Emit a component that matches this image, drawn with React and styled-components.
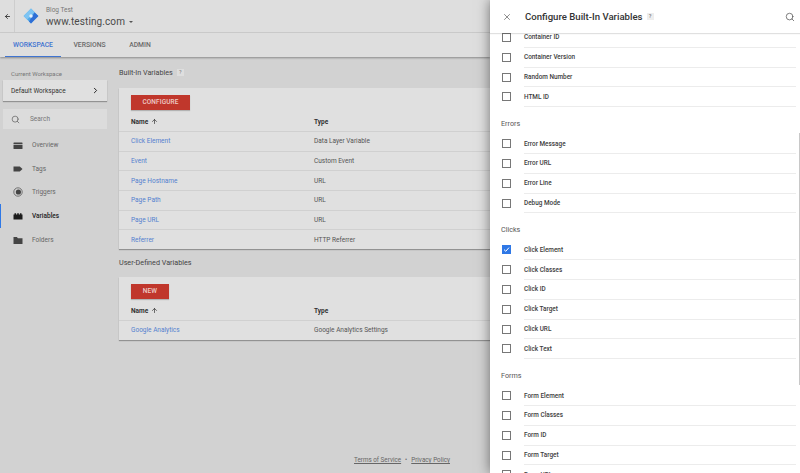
import React from "react";
import styled, { createGlobalStyle } from "styled-components";
import { ArrowLeft, ArrowUp, ChevronRight, Search, X } from "lucide-react";

const GlobalStyle = createGlobalStyle`
  html, body { margin: 0; padding: 0; background: #d2d2d2; }
  body { font-family: Roboto, "Liberation Sans", sans-serif; }
  * { box-sizing: border-box; }
`;

const Page = styled.div`
  display: flex;
  width: 800px;
  height: 473px;
  overflow: hidden;
`;
const Main = styled.div`
  display: flex;
  flex-direction: column;
  flex: 0 0 490px;
  width: 490px;
  height: 473px;
  overflow: hidden;
  background: #d2d2d2;
`;
const TopBar = styled.header`
  display: flex;
  align-items: center;
  flex: 0 0 33px;
  background: #dedede;
  border-bottom: 1px solid #cecece;
`;
const BackBox = styled.div`
  display: flex;
  align-items: center;
  justify-content: center;
  width: 15px;
  height: 32px;
  border-right: 1px solid #cdcdcd;
  color: #333;
`;
const Logo = styled.svg`
  width: 16px;
  height: 16px;
  margin: 0 7px 0 8px;
  flex: none;
`;
const Crumbs = styled.div`
  display: flex;
  flex-direction: column;
  padding-top: 2px;
`;
const AccountName = styled.span`
  font-size: 6.5px;
  line-height: 9px;
  color: #777;
`;
const ContainerName = styled.span`
  display: flex;
  align-items: center;
  gap: 4px;
  font-size: 10px;
  line-height: 13px;
  color: #4a4a4a;
  letter-spacing: 0.1px;
`;
const Caret = styled.i`
  width: 0;
  height: 0;
  border-left: 2.5px solid transparent;
  border-right: 2.5px solid transparent;
  border-top: 2.5px solid #555;
`;
const Tabs = styled.nav`
  display: flex;
  flex: 0 0 24px;
  padding-left: 5px;
  background: #dedede;
  box-shadow: 0 1px 2px rgba(0, 0, 0, 0.35);
  position: relative;
`;
const Tab = styled.div`
  display: flex;
  align-items: center;
  justify-content: center;
  width: ${(p) => p.$w}px;
  margin-right: ${(p) => p.$gap}px;
  font-size: 6.8px;
  font-weight: 500;
  color: ${(p) => (p.$active ? "#3f74d1" : "#6a6a6a")};
  border-bottom: 1px solid ${(p) => (p.$active ? "#3f74d1" : "transparent")};
`;
const Body = styled.div`
  display: flex;
  flex: 1;
  min-height: 0;
`;
const Sidebar = styled.aside`
  display: flex;
  flex-direction: column;
  flex: 0 0 119px;
  padding-top: 13px;
`;
const WorkspaceLabel = styled.div`
  font-size: 6px;
  line-height: 8px;
  color: #777;
  padding-left: 11px;
  margin-bottom: 2px;
`;
const WorkspaceBox = styled.div`
  display: flex;
  align-items: center;
  justify-content: space-between;
  width: 104px;
  height: 21px;
  margin-left: 3px;
  padding: 0 7px 0 8px;
  font-size: 6.5px;
  color: #333;
  background: #e0e0e0;
  box-shadow: 0 1px 1px rgba(0, 0, 0, 0.3);
`;
const SearchBox = styled.div`
  display: flex;
  align-items: center;
  gap: 10px;
  width: 104px;
  height: 20px;
  margin: 8px 0 4px 3px;
  padding-left: 8px;
  font-size: 6.5px;
  color: #777;
  background: #dcdcdc;
`;
const NavItem = styled.div`
  display: flex;
  align-items: center;
  gap: 9px;
  height: 23.7px;
  padding-left: 13px;
  font-size: 6.5px;
  font-weight: ${(p) => (p.$active ? 500 : 400)};
  color: ${(p) => (p.$active ? "#222" : "#666")};
  border-left: 1px solid ${(p) => (p.$active ? "#2f78e6" : "transparent")};
`;
const NavIcon = styled.svg`
  width: 10px;
  height: 10px;
  flex: none;
  margin-left: -1px;
`;
const Content = styled.main`
  display: flex;
  flex-direction: column;
  flex: 1;
  min-width: 0;
`;
const SectionHead = styled.h2`
  display: flex;
  align-items: center;
  gap: 4px;
  height: ${(p) => p.$h}px;
  margin: 0;
  padding-bottom: ${(p) => p.$pb || 0}px;
  font-size: 7.2px;
  font-weight: 400;
  color: #444;
`;
const HelpMark = styled.span`
  display: inline-flex;
  align-items: center;
  justify-content: center;
  width: 7px;
  height: 7px;
  font-size: 5.5px;
  line-height: 7px;
  color: #777;
  background: ${(p) => (p.$light ? "#eee" : "#dedede")};
`;
const Card = styled.section`
  width: 400px;
  background: #e0e0e0;
  box-shadow: 0 1px 1px rgba(0, 0, 0, 0.3);
`;
const CardTop = styled.div`
  padding: 7px 12px 0;
  height: ${(p) => p.$h}px;
`;
const RedButton = styled.div`
  display: flex;
  align-items: center;
  justify-content: center;
  width: ${(p) => p.$w}px;
  height: 14.5px;
  font-size: 6.5px;
  font-weight: 500;
  letter-spacing: 0.1px;
  color: #eecdc9;
  background: #c0372c;
  box-shadow: 0 1px 1px rgba(0, 0, 0, 0.2);
`;
const Row = styled.div`
  display: grid;
  grid-template-columns: 183px 1fr;
  align-items: center;
  height: 19.7px;
  padding-left: 12px;
  font-size: 6.5px;
  color: #555;
  border-top: 1px solid #d0d0d0;
`;
const HeadRow = styled.div`
  display: grid;
  grid-template-columns: 183px 1fr;
  align-items: center;
  height: 19px;
  padding: 0 0 0 12px;
  font-size: 6.5px;
  font-weight: 700;
  color: #333;
`;
const NameCell = styled.span`
  display: flex;
  align-items: center;
  gap: 3px;
`;
const RowLink = styled.a`
  color: #5480cf;
`;
const Footer = styled.footer`
  display: flex;
  gap: 4px;
  justify-content: flex-end;
  margin-top: auto;
  padding: 0 40px 9px 0;
  font-size: 6.3px;
  line-height: 8px;
  color: #666;
`;
const FootLink = styled.a`
  text-decoration: underline;
`;
const Drawer = styled.div`
  display: flex;
  flex-direction: column;
  flex: 0 0 310px;
  height: 473px;
  background: #fff;
  box-shadow: 0 0 12px rgba(0, 0, 0, 0.5);
  position: relative;
  z-index: 2;
`;
const DrawerHead = styled.div`
  display: flex;
  align-items: center;
  flex: 0 0 33px;
  padding: 0 5px 0 12px;
  background: #fff;
  box-shadow: 0 1px 1px rgba(0, 0, 0, 0.12);
  position: relative;
  z-index: 1;
  color: #555;
`;
const DrawerTitle = styled.h1`
  flex: 1;
  display: flex;
  align-items: center;
  gap: 4px;
  margin: 0 0 0 13px;
  font-size: 9.6px;
  font-weight: 500;
  color: #333;
`;
const DrawerScroll = styled.div`
  flex: 1;
  min-height: 0;
  overflow: hidden;
  padding-left: 11px;
`;
const DrawerList = styled.div`
  margin-top: -5px;
`;
const GroupTitle = styled.div`
  display: flex;
  align-items: center;
  height: 27px;
  padding-top: 6px;
  font-size: 7.2px;
  color: #555;
`;
const CheckRow = styled.div`
  display: flex;
  height: 19.8px;
`;
const Check = styled.span`
  display: flex;
  align-items: center;
  justify-content: center;
  flex: none;
  width: 9px;
  height: 9px;
  margin: 5px 13px 0 1px;
  border: 1px solid ${(p) => (p.$on ? "#2f78e6" : "#777")};
  background: ${(p) => (p.$on ? "#2f78e6" : "#fff")};
  color: #fff;
`;
const CheckLabel = styled.div`
  flex: 1;
  margin-right: 4px;
  display: flex;
  align-items: center;
  font-size: 6.4px;
  font-weight: 500;
  color: #3c3c3c;
  border-bottom: 1px solid #ececec;
`;
const ScrollThumb = styled.div`
  position: absolute;
  right: 0;
  top: 133px;
  width: 1px;
  height: 252px;
  background: #c8c8c8;
`;

const builtIn = [
  ["Click Element", "Data Layer Variable"],
  ["Event", "Custom Event"],
  ["Page Hostname", "URL"],
  ["Page Path", "URL"],
  ["Page URL", "URL"],
  ["Referrer", "HTTP Referrer"],
];

const groups = [
  { items: ["Container ID", "Container Version", "Random Number", "HTML ID"] },
  { title: "Errors", items: ["Error Message", "Error URL", "Error Line", "Debug Mode"] },
  { title: "Clicks", items: ["Click Element", "Click Classes", "Click ID", "Click Target", "Click URL", "Click Text"] },
  { title: "Forms", items: ["Form Element", "Form Classes", "Form ID", "Form Target", "Form URL"] },
];

const navIcons = {
  Overview: (
    <>
      <path d="M1 2.5h8a.5.5 0 0 1 .5.5v1H.5V3a.5.5 0 0 1 .5-.5z" fill="#444" />
      <path d="M.5 4.8h9v3.7a.5.5 0 0 1-.5.5H1a.5.5 0 0 1-.5-.5z" fill="#444" />
    </>
  ),
  Tags: <path d="M.5 2.5h6.3L9.5 5 6.8 7.5H.5z" fill="#444" />,
  Triggers: (
    <>
      <circle cx="5" cy="5" r="4.2" fill="none" stroke="#666" strokeWidth="0.9" />
      <circle cx="5.4" cy="5" r="2.6" fill="#444" />
    </>
  ),
  Variables: <path d="M.5 8.5V3.5h1V2.3h1.6v1.2h1.1V2.3h1.6v1.2h1.1V2.3h1.6v1.2h1v5z" fill="#1c1c1c" />,
  Folders: <path d="M.5 2h3.4l1 1.2h4.6v5.8H.5z" fill="#444" />,
};

function Sort() {
  return <ArrowUp size={7} strokeWidth={2.4} />;
}

export default function App() {
  return (
    <Page>
      <GlobalStyle />
      <Main>
        <TopBar>
          <BackBox>
            <ArrowLeft size={7} strokeWidth={3} />
          </BackBox>
          <Logo viewBox="0 0 16 16">
            <path d="M8 .6 15.4 8 8 15.4.6 8z" fill="#4fa8e8" />
            <path d="M8 .6 11.6 4.2 4.2 11.6.6 8z" fill="#7ec4f2" />
            <path d="M11.6 4.4 15.4 8 8 15.4 6 13.4z" fill="#2f6fd6" />
            <circle cx="8" cy="8" r="1.7" fill="#e8f2fb" />
          </Logo>
          <Crumbs>
            <AccountName>Blog Test</AccountName>
            <ContainerName>
              www.testing.com <Caret />
            </ContainerName>
          </Crumbs>
        </TopBar>
        <Tabs>
          <Tab $active $w={56} $gap={7}>WORKSPACE</Tab>
          <Tab $w={43} $gap={18}>VERSIONS</Tab>
          <Tab $w={22} $gap={0}>ADMIN</Tab>
        </Tabs>
        <Body>
          <Sidebar>
            <WorkspaceLabel>Current Workspace</WorkspaceLabel>
            <WorkspaceBox>
              Default Workspace
              <ChevronRight size={9} strokeWidth={2.6} color="#222" />
            </WorkspaceBox>
            <SearchBox>
              <Search size={9} color="#666" />
              Search
            </SearchBox>
            {Object.keys(navIcons).map((name) => (
              <NavItem key={name} $active={name === "Variables"}>
                <NavIcon viewBox="0 0 10 10">{navIcons[name]}</NavIcon>
                {name}
              </NavItem>
            ))}
          </Sidebar>
          <Content>
            <SectionHead $h={31}>
              Built-In Variables <HelpMark>?</HelpMark>
            </SectionHead>
            <Card>
              <CardTop $h={24}>
                <RedButton $w={59}>CONFIGURE</RedButton>
              </CardTop>
              <HeadRow>
                <NameCell>Name <Sort /></NameCell>
                <span>Type</span>
              </HeadRow>
              {builtIn.map(([name, type]) => (
                <Row key={name}>
                  <RowLink>{name}</RowLink>
                  <span>{type}</span>
                </Row>
              ))}
            </Card>
            <SectionHead $h={28} $pb={2}>User-Defined Variables</SectionHead>
            <Card>
              <CardTop $h={24}>
                <RedButton $w={38}>NEW</RedButton>
              </CardTop>
              <HeadRow>
                <NameCell>Name <Sort /></NameCell>
                <span>Type</span>
              </HeadRow>
              <Row>
                <RowLink>Google Analytics</RowLink>
                <span>Google Analytics Settings</span>
              </Row>
            </Card>
            <Footer>
              <FootLink>Terms of Service</FootLink>
              <span>•</span>
              <FootLink>Privacy Policy</FootLink>
            </Footer>
          </Content>
        </Body>
      </Main>
      <Drawer>
        <DrawerHead>
          <X size={10} strokeWidth={1.6} />
          <DrawerTitle>
            Configure Built-In Variables <HelpMark $light>?</HelpMark>
          </DrawerTitle>
          <Search size={10} strokeWidth={1.8} />
        </DrawerHead>
        <DrawerScroll>
          <DrawerList>
            {groups.map((g) => (
              <div key={g.items[0]}>
                {g.title && <GroupTitle>{g.title}</GroupTitle>}
                {g.items.map((item) => {
                  const on = g.title === "Clicks" && item === "Click Element";
                  return (
                    <CheckRow key={item}>
                      <Check $on={on}>
                        {on && (
                          <svg width="7" height="7" viewBox="0 0 7 7">
                            <path d="M1 3.6 2.8 5.3 6 1.6" fill="none" stroke="#fff" strokeWidth="1" />
                          </svg>
                        )}
                      </Check>
                      <CheckLabel>{item}</CheckLabel>
                    </CheckRow>
                  );
                })}
              </div>
            ))}
          </DrawerList>
        </DrawerScroll>
        <ScrollThumb />
      </Drawer>
    </Page>
  );
}
